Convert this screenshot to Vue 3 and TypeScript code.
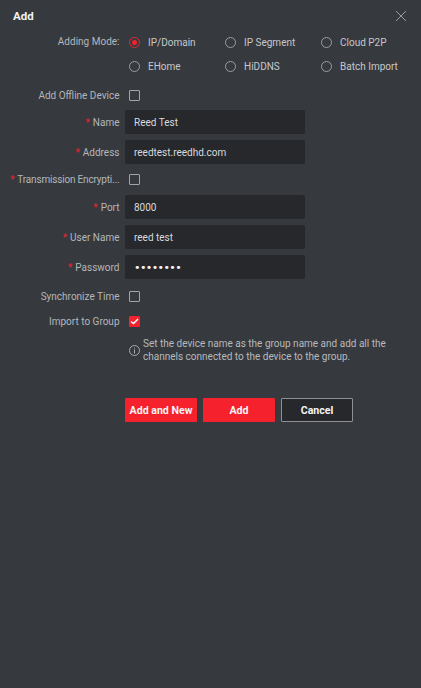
<script setup lang="ts">
type Row = { label: string; req?: boolean; value?: string; kind: 'input' | 'check'; checked?: boolean; pw?: boolean; narrow?: boolean }
const modes = ['IP/Domain', 'IP Segment', 'Cloud P2P', 'EHome', 'HiDDNS', 'Batch Import']
const rows: Row[] = [
  { label: 'Add Offline Device', kind: 'check' },
  { label: 'Name', req: true, value: 'Reed Test', kind: 'input' },
  { label: 'Address', req: true, value: 'reedtest.reedhd.com', kind: 'input' },
  { label: 'Transmission Encrypti...', req: true, kind: 'check', narrow: true },
  { label: 'Port', req: true, value: '8000', kind: 'input' },
  { label: 'User Name', req: true, value: 'reed test', kind: 'input' },
  { label: 'Password', req: true, value: '••••••••', kind: 'input', pw: true },
  { label: 'Synchronize Time', kind: 'check' },
  { label: 'Import to Group', kind: 'check', checked: true },
]
</script>

<template>
  <div class="dialog">
    <header class="head">
      <span class="title">Add</span>
      <svg class="close" width="12" height="12" viewBox="0 0 12 12">
        <path d="M1 1 L11 11 M11 1 L1 11" stroke="#9a9da1" stroke-width="1" fill="none" />
      </svg>
    </header>
    <div class="mode-row">
      <span class="label">Adding Mode:</span>
      <div class="modes">
        <label v-for="(m, i) in modes" :key="m" class="mode">
          <span class="radio" :class="{ on: i === 0 }"></span>
          <span>{{ m }}</span>
        </label>
      </div>
    </div>
    <div class="form">
      <div v-for="r in rows" :key="r.label" class="row">
        <span class="label" :class="{ narrow: r.narrow }"><i v-if="r.req" class="req">*</i><span v-if="r.req" class="star-gap"></span>{{ r.label }}</span>
        <div v-if="r.kind === 'input'" class="field" :class="{ pw: r.pw }">{{ r.value }}</div>
        <span v-else class="box" :class="{ on: r.checked }">
          <svg v-if="r.checked" width="9" height="7" viewBox="0 0 9 7">
            <path d="M1 3.5 L3.5 5.5 L8 1" stroke="#fff" stroke-width="1.5" fill="none" />
          </svg>
        </span>
      </div>
    </div>
    <div class="hint">
      <svg class="info" width="11" height="11" viewBox="0 0 11 11">
        <circle cx="5.5" cy="5.5" r="5" stroke="#a8abaf" stroke-width="1" fill="none" />
        <path d="M5.5 4.5 V8.5 M5.5 2.5 V3.5" stroke="#a8abaf" stroke-width="1" fill="none" />
      </svg>
      <p>Set the device name as the group name and add all the channels connected to the device to the group.</p>
    </div>
    <div class="actions">
      <button class="btn red">Add and New</button>
      <button class="btn red">Add</button>
      <button class="btn ghost">Cancel</button>
    </div>
  </div>
</template>

<style>
html, body { margin: 0; background: #36393e; }
</style>

<style scoped>
.dialog {
  width: 421px;
  height: 688px;
  box-sizing: border-box;
  background: #36393e;
  color: #b6b9bd;
  font-family: Roboto, "Noto Sans", sans-serif;
  font-size: 10px;
  overflow: hidden;
}
.head {
  display: flex;
  justify-content: space-between;
  align-items: center;
  height: 32px;
  padding: 0 14px 0 13px;
}
.title { color: #f2f3f4; font-size: 11.5px; font-weight: 700; }
.mode-row { display: flex; }
.label {
  width: 119.5px;
  flex: none;
  text-align: right;
  white-space: nowrap;
  color: #b4b7bb;
  line-height: 20px;
}
.narrow { letter-spacing: -0.18px; }
.req { color: #f0232d; font-style: normal; }
.star-gap { display: inline-block; width: 3px; }
.modes {
  margin-left: 9.5px;
  display: grid;
  grid-template-columns: 96px 96px 96px;
  grid-auto-rows: 24px;
}
.mode { display: flex; align-items: center; gap: 8px; height: 20px; color: #c6c8cb; }
.radio {
  width: 9px;
  height: 9px;
  border: 1px solid #9a9da1;
  border-radius: 50%;
  position: relative;
}
.radio.on { border-color: #f0232d; }
.radio.on::after {
  content: "";
  position: absolute;
  inset: 2px;
  background: #f0232d;
  border-radius: 50%;
}
.form {
  display: grid;
  grid-template-rows: 24px 30px 30px 25px 30px 30px 30px 28px 22px;
  margin-top: 3px;
}
.row { display: flex; align-items: center; }
.row .label { padding-top: 1px; }
.field {
  margin-left: 5.5px;
  width: 180px;
  height: 24px;
  box-sizing: border-box;
  background: #26282c;
  border-radius: 2px;
  padding-left: 9px;
  line-height: 25px;
  color: #d8dadc;
}
.pw { font-family: "DejaVu Sans", sans-serif; font-size: 11px; letter-spacing: -0.6px; color: #f2f3f4; }
.box {
  margin-left: 9.5px;
  width: 9px;
  height: 9px;
  border: 1px solid #a2a5a9;
  border-radius: 1px;
  display: flex;
  align-items: center;
  justify-content: center;
}
.box.on { background: #f5222d; border-color: #f5222d; }
.hint { display: flex; margin-left: 129px; gap: 3px; align-items: center; margin-top: 5px; }
.hint p { margin: 0; width: 250px; line-height: 13px; color: #b6b9bd; }
.actions { display: flex; gap: 6px; margin-left: 125px; margin-top: 35px; }
.btn {
  width: 72px;
  height: 24px;
  border-radius: 1px;
  font-family: inherit;
  font-size: 10.6px;
  font-weight: 700;
  color: #f4f4f5;
  padding: 0;
  box-sizing: border-box;
}
.red { background: #f5222d; border: none; }
.ghost { background: #26282c; border: 1px solid #8d9094; }
</style>
